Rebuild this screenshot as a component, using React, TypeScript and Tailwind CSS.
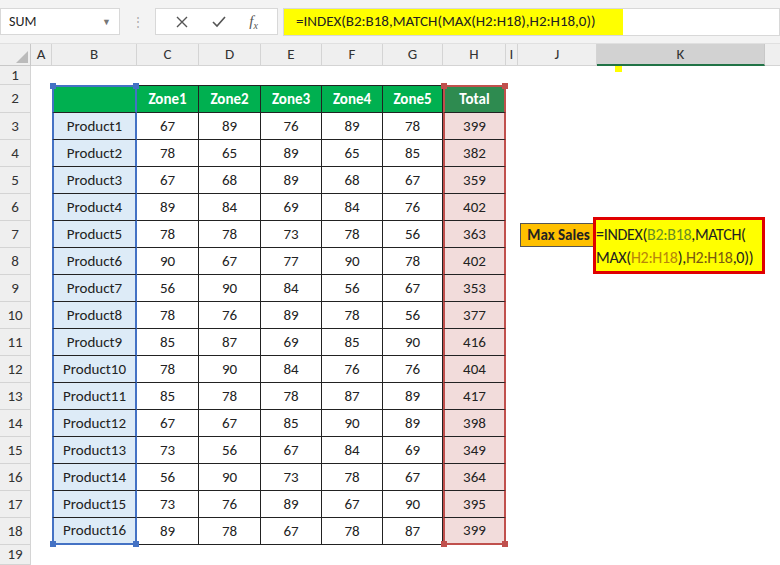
import React from "react";

const cols = ["A","B","C","D","E","F","G","H","I","J","K"];
const data: [string, number[], number][] = [
["Product1",[67,89,76,89,78],399],["Product2",[78,65,89,65,85],382],["Product3",[67,68,89,68,67],359],["Product4",[89,84,69,84,76],402],["Product5",[78,78,73,78,56],363],["Product6",[90,67,77,90,78],402],["Product7",[56,90,84,56,67],353],["Product8",[78,76,89,78,56],377],["Product9",[85,87,69,85,90],416],["Product10",[78,90,84,76,76],404],["Product11",[85,78,78,87,89],417],["Product12",[67,67,85,90,89],398],["Product13",[73,56,67,84,69],349],["Product14",[56,90,73,78,67],364],["Product15",[73,76,89,67,90],395],["Product16",[89,78,67,78,87],399]];

const gridCols = "grid-cols-[31px_21px_85px_62px_62px_61px_61px_60px_63px_12px_79px_168px_1fr]";

function RowHead({n, h}:{n:number;h:string}) {
  return <div className={`${h} bg-[#efefef] border-r border-b border-[#d4d4d4] flex items-center justify-center text-[15px] text-[#333]`}>{n}</div>;
}

export default function App() {
  const f = { fontFamily: "Calibri, Carlito, 'Open Sans', 'Liberation Sans', sans-serif" };
  return (
    <div className="w-[780px] h-[565px] overflow-hidden bg-white text-[#222]" style={f}>
      <div className="h-[44px] bg-[#f3f3f3] flex items-center px-0 gap-0 border-b border-[#e0e0e0]">
        <div className="ml-0 w-[120px] h-[27px] bg-white border border-[#d8d8d8] flex items-center justify-between px-2 text-[14px]">
          <span>SUM</span><span className="text-[9px] text-[#777]">▼</span>
        </div>
        <div className="w-[35px] flex justify-center text-[#aaa] text-[12px]">⋮</div>
        <div className="w-[123px] h-[27px] bg-white border border-[#d8d8d8] flex items-center justify-around px-2 text-[#555]">
          <svg width="14" height="14" viewBox="0 0 14 14"><path d="M2 2L12 12M12 2L2 12" stroke="#555" strokeWidth="1.4"/></svg>
          <svg width="16" height="14" viewBox="0 0 16 14"><path d="M2 7L6 11L14 2" stroke="#555" strokeWidth="1.6" fill="none"/></svg>
          <span className="italic text-[15px]" style={{fontFamily:"'Liberation Serif', serif"}}>f<sub className="text-[10px]">x</sub></span>
        </div>
        <div className="flex-1 h-[28px] bg-white border border-[#d8d8d8] ml-[5px] flex items-center">
          <div className="h-full bg-[#ffff00] flex items-center px-3 text-[15px] w-[339px]">=INDEX(B2:B18,MATCH(MAX(H2:H18),H2:H18,0))</div>
        </div>
      </div>
      <div className={`grid ${gridCols} text-[15px]`}>
        <div className="h-[22px] bg-[#efefef] border-r border-b border-[#c8c8c8] flex items-end justify-end p-[2px]"><div className="w-0 h-0 border-l-[12px] border-l-transparent border-b-[12px] border-b-[#bbb]"/></div>
        {cols.map((c)=> <div key={c} className={`h-[22px] border-r border-b flex items-center justify-center text-[15px] ${c==="K"?"bg-[#d2d2d2] border-b-2 border-b-[#217346] border-[#c8c8c8]":"bg-[#efefef] border-[#d4d4d4]"} text-[#333]`}>{c}</div>)}
        <div className="h-[22px] bg-[#efefef] border-b border-[#d4d4d4]"/>
        <RowHead n={1} h="h-[19px]"/>
        {cols.map((c)=> <div key={c} className="h-[19px] relative">{c==="K" && <div className="absolute left-[18px] top-0 w-[7px] h-[6px] bg-[#ffff00]"/>}</div>)}
        <div/>
        <RowHead n={2} h="h-[28px]"/>
        <div/>
        <div className="bg-[#00b050] border-2 border-[#4472c4] border-b-[#222] border-b relative"><span className="absolute -left-[4px] -top-[4px] w-[6px] h-[6px] bg-[#4472c4]"/><span className="absolute -right-[4px] -top-[4px] w-[6px] h-[6px] bg-[#4472c4]"/></div>
        {["Zone1","Zone2","Zone3","Zone4","Zone5"].map(z=> <div key={z} className="bg-[#00b050] text-white font-bold flex items-center justify-center border-r border-t border-b border-[#222]">{z}</div>)}
        <div className="bg-[#2e8b50] text-white font-bold flex items-center justify-center border-2 border-[#c0504d] border-b border-b-[#222] relative">Total<span className="absolute -left-[4px] -top-[4px] w-[6px] h-[6px] bg-[#c0504d]"/><span className="absolute -right-[4px] -top-[4px] w-[6px] h-[6px] bg-[#c0504d]"/></div>
        <div/><div/><div/><div/>
        {data.map(([p, v, t], i)=>{
          const last = i===data.length-1;
          const r = i+3;
          return (
            <React.Fragment key={p}>
              <RowHead n={r} h="h-[27px]"/>
              <div/>
              <div className={`bg-[#ddebf7] border-x-2 border-[#4472c4] ${last?"border-b-2":"border-b border-b-[#222]"} flex items-center justify-center relative`}>{p}{last && <><span className="absolute -left-[4px] -bottom-[4px] w-[6px] h-[6px] bg-[#4472c4]"/><span className="absolute -right-[4px] -bottom-[4px] w-[6px] h-[6px] bg-[#4472c4]"/></>}</div>
              {v.map((x,j)=> <div key={j} className="flex items-center justify-center border-r border-b border-[#222]">{x}</div>)}
              <div className={`bg-[#f2dcdb] border-x-2 border-[#c0504d] ${last?"border-b-2":"border-b border-b-[#222]"} flex items-center justify-center relative`}>{t}{last && <><span className="absolute -left-[4px] -bottom-[4px] w-[6px] h-[6px] bg-[#c0504d]"/><span className="absolute -right-[4px] -bottom-[4px] w-[6px] h-[6px] bg-[#c0504d]"/></>}</div>
              <div/>
              <div className="relative">{r===7 && <div className="absolute left-[2px] top-[2px] w-[77px] h-[24px] bg-[#ffc000] border border-[#555] font-bold text-[15px] flex items-center justify-center z-10">Max Sales</div>}</div>
              <div className="relative">{r===7 && <div className="absolute -left-[4px] -top-[4px] w-[172px] h-[57px] bg-[#ffff00] border-[3px] border-[#e00000] z-10 text-[16px] leading-[23px] px-0 pt-[3px] tracking-[-0.3px]">=INDEX(<span className="text-[#6a8e23]">B2:B18</span>,MATCH(<br/>MAX(<span className="text-[#b8860b]">H2:H18</span>),<span className="text-[#7a5a10]">H2:H18</span>,0))</div>}</div>
              <div/>
            </React.Fragment>
          );
        })}
        <RowHead n={19} h="h-[20px]"/>
      </div>
    </div>
  );
}
